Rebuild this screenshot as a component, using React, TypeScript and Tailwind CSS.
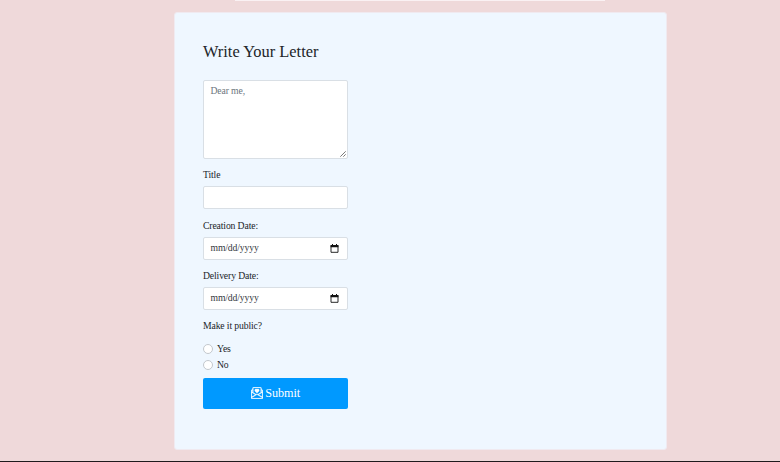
import type { ReactNode } from 'react';
import { BsEnvelopePaperHeart } from 'react-icons/bs';

function CalendarIcon() {
  return (
    <svg className="h-[9px] w-[9px]" viewBox="0 0 9 9" fill="none">
      <path d="M1 1.5h7v6.8H1z" stroke="#111" strokeWidth="0.9" />
      <path d="M.6 1h7.8v2.2H.6zM2 0h1v1H2zM6 0h1v1H6z" fill="#111" />
    </svg>
  );
}

function Field({ label, children }: { label: string; children?: ReactNode }) {
  return (
    <label className="block h-[50.2px]">
      <span className="block h-[18px] leading-[14px]">{label}</span>
      <span className="flex h-[23px] items-center justify-between rounded-[2px] border border-[#d9dfe5] bg-white pr-2 pl-[6.5px]">
        {children}
      </span>
    </label>
  );
}

function DateValue() {
  return (
    <>
      <span className="leading-[14px] text-[#33383d]">mm/dd/yyyy</span>
      <CalendarIcon />
    </>
  );
}

function Choice({ label }: { label: string }) {
  return (
    <label className="flex h-[15.5px] items-center">
      <span className="mr-1 h-[10px] w-[10px] rounded-full border border-[#c3c8cd] bg-white" />
      <span className="leading-[14px]">{label}</span>
    </label>
  );
}

export default function App() {
  return (
    <div className="flex h-[462px] flex-col items-center overflow-hidden border-b border-[#211a1e] bg-[#efd9da] font-['Liberation_Serif',serif] text-[9.7px] tracking-[-0.13px] text-[#212529]">
      <div className="ml-[60px] h-px w-[370px] shrink-0 bg-[#faf1f3]" />
      <main className="mt-[11px] ml-[60px] h-[438px] w-[493px] shrink-0 rounded-[3px] border border-[#f0eaf0] bg-[#eff7ff] pt-[28px] pl-[28.5px]">
        <h1 className="h-[39px] text-[16.4px] leading-[21px] tracking-normal">Write Your Letter</h1>
        <form className="w-[145px]">
          <div className="relative mb-[9.4px] h-[79px] rounded-[2px] border border-[#d9dfe5] bg-white px-[6.5px] pt-[3px] leading-[14px] text-[#6c757d]">
            Dear me,
            <svg className="absolute right-[1px] bottom-[1px] h-[6px] w-[6px]" viewBox="0 0 6 6" stroke="#555" strokeWidth="0.8">
              <path d="M0.3 5.7 5.7.3M3.3 5.7 5.7 3.3" />
            </svg>
          </div>
          <Field label="Title" />
          <Field label="Creation Date:">
            <DateValue />
          </Field>
          <Field label="Delivery Date:">
            <DateValue />
          </Field>
          <p className="h-[22.5px] leading-[14px]">Make it public?</p>
          <Choice label="Yes" />
          <Choice label="No" />
          <button
            type="button"
            className="mt-[5.1px] flex h-[31px] w-full items-center justify-center gap-[2.5px] rounded-[2px] bg-[#0099ff] text-[12.2px] leading-none tracking-[-0.05px] text-white"
          >
            <BsEnvelopePaperHeart className="h-3 w-3" strokeWidth={0.4} />
            <span>Submit</span>
          </button>
        </form>
      </main>
    </div>
  );
}
